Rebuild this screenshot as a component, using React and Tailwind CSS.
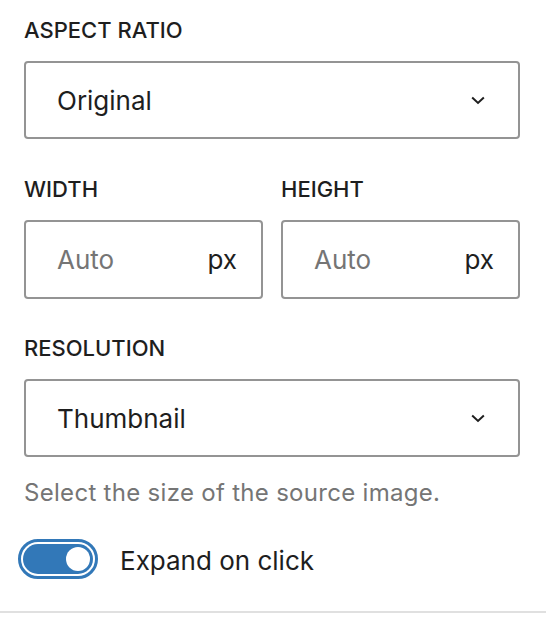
import { ChevronDown } from "lucide-react";

const font = { fontFamily: "Inter, 'Noto Sans', sans-serif" };

function Label({ children }) {
  return (
    <div className="h-[32px] leading-[32px] text-[22px] font-medium uppercase text-[#1e1e1e] mb-[15px]">
      {children}
    </div>
  );
}

function SelectBox({ value }) {
  return (
    <div className="h-[78px] border-2 border-[#949494] rounded-[4px] flex items-center justify-between pl-[31px] pr-[30px]">
      <span className="text-[26px] text-[#1e1e1e]">{value}</span>
      <svg width="20" height="20" viewBox="0 0 24 24" className="text-[#1e1e1e]">
        <path d="M5 9 L12 15.5 L19 9" fill="none" stroke="currentColor" strokeWidth="2.4" />
      </svg>
    </div>
  );
}

function UnitInput() {
  return (
    <div className="h-[79px] border-2 border-[#949494] rounded-[4px] flex items-center justify-between pl-[31px] pr-[24px]">
      <span className="text-[26px] text-[#757575]">Auto</span>
      <span className="text-[26px] text-[#1e1e1e]">px</span>
    </div>
  );
}

export default function App() {
  return (
    <div className="w-[546px] h-[620px] bg-white" style={font}>
      <div className="w-[496px] ml-[24px] pt-[14px]">
        <Label>Aspect ratio</Label>
        <SelectBox value="Original" />

        <div className="grid grid-cols-2 gap-[18px] mt-[34px]">
          <div>
            <Label>Width</Label>
            <UnitInput />
          </div>
          <div>
            <Label>Height</Label>
            <UnitInput />
          </div>
        </div>

        <div className="mt-[33px]">
          <Label>Resolution</Label>
          <SelectBox value="Thumbnail" />
        </div>

        <p className="mt-[20px] h-[32px] leading-[32px] text-[24px] tracking-[0.3px] text-[#757575]">
          Select the size of the source image.
        </p>

        <div className="mt-[28px] flex items-center gap-[22px] -ml-[6px]">
          <div className="w-[80px] h-[40px] rounded-full border-[3px] border-[#3278b8] p-[2px]">
            <div className="w-full h-full rounded-full bg-[#3278b8] flex items-center justify-end pr-[3px]">
              <div className="w-[24px] h-[24px] rounded-full bg-white" />
            </div>
          </div>
          <span className="text-[26px] text-[#1e1e1e] pt-[4px]">Expand on click</span>
        </div>
      </div>
      <div className="mt-[31px] h-[2px] bg-[#e0e0e0]" />
    </div>
  );
}
